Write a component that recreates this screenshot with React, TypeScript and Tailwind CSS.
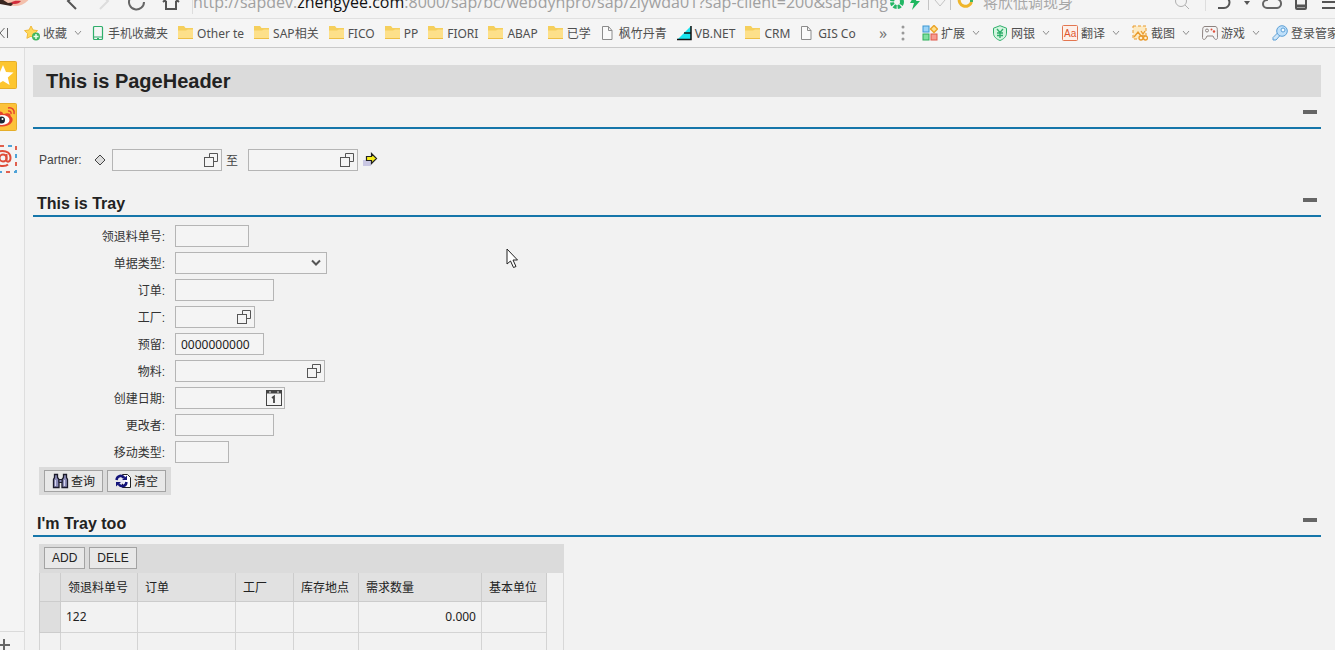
import type { ReactNode } from "react";

const FolderIcon = () => (
  <svg width="16" height="16" viewBox="0 0 16 16" className="shrink-0">
    <path d="M0 1h6l1.500 2H15v11H0z" fill="#f5cf5c" />
    <path d="M0 5.500h8l2-1h5V14H0z" fill="#fde08a" />
    <path d="M0 13.500h15" stroke="#eebf45" />
  </svg>
);

const PageIcon = () => (
  <svg width="15" height="16" viewBox="0 0 15 16" className="shrink-0" fill="#fafafa" stroke="#8c8c8c">
    <path d="M1.500 1.500h6l3.500 4v9H1.500z" />
    <path d="M7.500 1.500v4H11" fill="none" />
  </svg>
);

const StarAddIcon = () => (
  <svg width="16" height="16" viewBox="0 0 16 16" className="shrink-0">
    <path d="M7 1l2 4 4.500.6-3.200 3.100.8 4.600L7 11.200l-4.100 2.100.8-4.600L.5 5.600 5 5z" fill="#ffd95a" stroke="#f0b93a" />
    <circle cx="12" cy="11.500" r="4" fill="#3fb55f" />
    <path d="M12 9v5M9.500 11.500h5" stroke="#e9ffe9" strokeWidth="1.500" />
  </svg>
);

const PhoneIcon = () => (
  <svg width="13" height="16" viewBox="0 0 13 16" className="shrink-0" fill="none" stroke="#2fae6b">
    <rect x="1.500" y="1.500" width="9" height="13" rx="1" strokeWidth="1.200" />
    <path d="M2 12h8M5 13.500h2" />
  </svg>
);

const VbIcon = () => (
  <svg width="15" height="16" viewBox="0 0 15 16" className="shrink-0">
    <path d="M14 1v14H0z" fill="#19e3ee" />
    <path d="M14 1v13.500H0M7 8h7" stroke="#111" strokeWidth="1.500" fill="none" />
  </svg>
);

const Chevron = () => (
  <svg width="8" height="6" viewBox="0 0 8 6" className="shrink-0" fill="none" stroke="#8f8f8f">
    <path d="M1 1l3 3.500L7 1" />
  </svg>
);

const bookmarks: { label: string; icon: ReactNode; menu?: boolean }[] = [
  { label: "收藏", icon: <StarAddIcon />, menu: true },
  { label: "手机收藏夹", icon: <PhoneIcon /> },
  { label: "Other te", icon: <FolderIcon /> },
  { label: "SAP相关", icon: <FolderIcon /> },
  { label: "FICO", icon: <FolderIcon /> },
  { label: "PP", icon: <FolderIcon /> },
  { label: "FIORI", icon: <FolderIcon /> },
  { label: "ABAP", icon: <FolderIcon /> },
  { label: "已学", icon: <FolderIcon /> },
  { label: "枫竹丹青", icon: <PageIcon /> },
  { label: "VB.NET", icon: <VbIcon /> },
  { label: "CRM", icon: <FolderIcon /> },
  { label: "GIS Co", icon: <PageIcon /> },
];

const tools: { label: string; icon: ReactNode }[] = [
  {
    label: "扩展",
    icon: (
      <svg width="16" height="16" viewBox="0 0 16 16" className="shrink-0">
        <rect x="1" y="1" width="6" height="6" fill="#9bd3f7" stroke="#3b97d3" />
        <rect x="1" y="9" width="6" height="6" fill="#7fe0a0" stroke="#2fae5b" />
        <rect x="9" y="9" width="6" height="6" fill="#f79b8f" stroke="#e0584a" />
        <path d="M12 .5L15.500 4 12 7.500 8.500 4z" fill="#ffe08a" stroke="#eba52b" strokeWidth="1.500" />
      </svg>
    ),
  },
  {
    label: "网银",
    icon: (
      <svg width="16" height="16" viewBox="0 0 16 16" className="shrink-0" stroke="#2fae6b" fill="none">
        <path d="M8 .7l6.500 2.500v5c0 3.500-3 6-6.500 7.300-3.500-1.300-6.500-3.800-6.500-7.300v-5z" fill="#d3f5df" />
        <path d="M5 4l3 3.500L11 4M8 7.500V13M5 8h6M5 10.500h6" strokeWidth="1.300" />
      </svg>
    ),
  },
  {
    label: "翻译",
    icon: (
      <svg width="16" height="16" viewBox="0 0 16 16" className="shrink-0">
        <rect x=".5" y=".5" width="15" height="15" rx="1" fill="#fdf0ea" stroke="#e37650" />
        <text x="2" y="12" fontSize="10" fontFamily="Liberation Sans, sans-serif" fill="#e0562e">Aa</text>
      </svg>
    ),
  },
  {
    label: "截图",
    icon: (
      <svg width="16" height="16" viewBox="0 0 16 16" className="shrink-0" fill="none" stroke="#e99a2c">
        <rect x="1" y="1" width="13" height="13" fill="#fdeac2" strokeDasharray="3 2" />
        <path d="M2 12l4-5 3 4M9 6l4 6M13 6l-4 6" strokeWidth="1.300" />
        <circle cx="9" cy="13" r="2" fill="#fff0d0" strokeWidth="1.300" />
        <circle cx="13.500" cy="13" r="2" fill="#fff0d0" strokeWidth="1.300" />
      </svg>
    ),
  },
  {
    label: "游戏",
    icon: (
      <svg width="16" height="16" viewBox="0 0 16 16" className="shrink-0" fill="none" stroke="#8d8380">
        <path d="M3 1.500h10c1.500 0 2.300 1 2.300 3l.2 8c0 2.500-2.500 2.500-3.500.5L11 11H5l-1 2C3 15 .5 15 .5 12.500l.2-8c0-2 .8-3 2.300-3z" />
        <circle cx="5" cy="5.500" r="1.500" />
        <circle cx="9.500" cy="4.500" r="1" fill="#e0503c" stroke="none" />
        <circle cx="12" cy="6.500" r="1.200" fill="#e0503c" stroke="none" />
      </svg>
    ),
  },
  {
    label: "登录管家",
    icon: (
      <svg width="16" height="16" viewBox="0 0 16 16" className="shrink-0" stroke="#5c9fd6">
        <path d="M5.500 8L1 12.500V15h3l4-4.500" fill="#cfe6f8" />
        <circle cx="10" cy="6" r="5.300" fill="#bfe0fa" />
        <circle cx="11" cy="5" r="2" fill="#f4fbff" />
      </svg>
    ),
  },
];

function AddressBar() {
  return (
    <div className="flex h-[19px] shrink-0 items-end overflow-hidden border-b border-[#e0e0e0] bg-[#f4f4f4]">
      <div className="flex h-8 w-full shrink-0 items-center text-[#5a5a5a]">
        <svg width="34" height="32" viewBox="0 0 34 32" className="shrink-0">
          <circle cx="15" cy="2" r="18" fill="#f3c0ac" />
          <path d="M0 12l8 5 7-1-4 4-11-2z" fill="#3a2620" />
          <path d="M11 17c3 2 8 1 10-2-3 0-7-1-10 2z" fill="#d22c3c" />
        </svg>
        <div className="flex w-[158px] shrink-0 items-center gap-4 pl-8">
          <svg width="12" height="18" viewBox="0 0 12 18" className="shrink-0" fill="none" stroke="#555" strokeWidth="2"><path d="M10 1L2 8l8 8" /></svg>
          <svg width="18" height="18" viewBox="0 0 18 18" className="shrink-0" fill="none" stroke="#ddd" strokeWidth="2"><path d="M6 1l8 7-8 8" /></svg>
          <svg width="18" height="18" viewBox="0 0 18 18" className="shrink-0" fill="none" stroke="#666" strokeWidth="2"><path d="M16 9a7.500 7.500 0 1 1-3-6" /></svg>
          <svg width="18" height="18" viewBox="0 0 18 18" className="shrink-0" fill="none" stroke="#555" strokeWidth="2"><path d="M1 9l8-7 8 7M4 8v8h10V8" /></svg>
        </div>
        <div className="w-[697px] shrink-0 border-l border-[#dddddd] font-['Open_Sans','Noto_Sans_CJK_SC',sans-serif] text-base whitespace-nowrap text-[#a0a0a0]">
          http://sapdev.<span className="text-[#111111]">zhengyee.com</span>:8000/sap/bc/webdynpro/sap/zlywda01?sap-client=200&amp;sap-lang
        </div>
        <div className="flex shrink-0 items-center gap-1">
          <svg width="16" height="16" viewBox="0 0 16 16"><circle cx="8" cy="8" r="5" fill="none" stroke="#22b765" strokeWidth="4" strokeDasharray="3 1" /></svg>
          <svg width="12" height="16" viewBox="0 0 12 16"><path d="M6 0L1 9h4l-2 7 8-9H7l3-7z" fill="#1fb860" /></svg>
          <svg width="28" height="16" viewBox="0 0 28 16" fill="none" stroke="#c4c4c4"><path d="M3.500 0v16M10 6l5 6 5-6M25.500 0v16" /></svg>
          <svg width="18" height="18" viewBox="0 0 18 18" fill="none" strokeWidth="3"><path d="M2.500 5a6 6 0 0 0 12 4" stroke="#efb52b" /><path d="M14.500 9V3" stroke="#3fb560" /></svg>
        </div>
        <span className="shrink-0 pl-2 text-[15px] whitespace-nowrap text-[#a8a8a8]">蒋欣低调现身</span>
        <div className="ml-auto flex shrink-0 items-center gap-3">
          <svg width="17" height="18" viewBox="0 0 17 18" fill="none" stroke="#b0b0b0"><circle cx="8" cy="8" r="5.500" /><path d="M12 12l4 4" /></svg>
          <svg width="30" height="18" viewBox="0 0 30 18" fill="none" stroke="#555" strokeWidth="2"><path d="M3.500 0v18" stroke="#ddd" strokeWidth="1" /><path d="M20 4h2a5 5 0 0 1 0 11h-6" /></svg>
          <svg width="6" height="18" viewBox="0 0 6 18"><path d="M0 8h6l-3 4z" fill="#555" /></svg>
          <svg width="20" height="18" viewBox="0 0 20 18" fill="none" stroke="#666" strokeWidth="2"><path d="M5 15a4 4 0 0 1 0-8 5 5 0 0 1 9-1 4.500 4.500 0 0 1 1 9z" /></svg>
          <svg width="16" height="18" viewBox="0 0 16 18" fill="none" stroke="#555" strokeWidth="2"><rect x="2" y="1" width="10" height="15" rx="1" /><path d="M2 13h10" strokeWidth="3" /></svg>
          <svg width="13" height="18" viewBox="0 0 13 18" stroke="#555" strokeWidth="2"><path d="M0 3h14M0 9h14M0 15h14" /></svg>
        </div>
      </div>
    </div>
  );
}

function BookmarksBar() {
  return (
    <nav className="flex h-[29px] shrink-0 items-center overflow-hidden border-b border-[#c9c9c9] bg-[#f5f5f5] text-xs whitespace-nowrap text-[#505050]">
      <svg width="24" height="12" viewBox="0 0 24 12" className="shrink-0" fill="none" stroke="#666">
        <path d="M4.500 1L0 6l4.500 5M7.500 1v10" />
      </svg>
      <div className="flex w-[855px] shrink-0 items-center gap-[10px] overflow-hidden">
        {bookmarks.map((b) => (
          <a key={b.label} href="#" className="flex shrink-0 items-center gap-[3px]">
            {b.icon}
            <span className="pt-[2px]">{b.label}</span>
            {b.menu && <span className="pl-1"><Chevron /></span>}
          </a>
        ))}
      </div>
      <button type="button" className="w-5 shrink-0 text-left text-base leading-4 text-[#777777]">»</button>
      <svg width="23" height="16" viewBox="0 0 23 16" className="shrink-0" fill="#999">
        <circle cx="4" cy="2" r="1.500" />
        <circle cx="4" cy="8" r="1.500" />
        <circle cx="4" cy="14" r="1.500" />
      </svg>
      {tools.map((t) => (
        <a key={t.label} href="#" className="flex w-[70px] shrink-0 items-center gap-[3px]">
          {t.icon}
          <span className="pt-[2px]">{t.label}</span>
          <span className="pl-1"><Chevron /></span>
        </a>
      ))}
    </nav>
  );
}

function SideBar() {
  return (
    <aside className="flex w-[25px] shrink-0 flex-col items-end overflow-hidden border-r border-[#dedede] bg-[#f4f4f4] pt-[13px]">
      <div className="flex flex-col gap-[14px] pr-[7px]">
        <svg width="28" height="28" viewBox="0 0 28 28">
          <rect x=".5" y=".5" width="27" height="27" rx="1" fill="#fdc62f" stroke="#e5ae2a" />
          <path d="M14 4l3 7 7.500.5-5.700 5 1.800 7.500-6.600-4-6.600 4 1.800-7.500-5.700-5L11 11z" fill="#fff" />
        </svg>
        <svg width="28" height="28" viewBox="0 0 28 28">
          <rect x=".5" y=".5" width="27" height="27" rx="1" fill="#fcc23a" stroke="#e5ae2a" />
          <path d="M3 17c0-6 7-10 10-8 1.500 1 .5 2 2 2s4-1.500 6 0c1 1 0 2 1.500 3 3 3 0 9-9 9.500C8 24 3 21 3 17z" fill="#e6432d" />
          <ellipse cx="13" cy="17" rx="7.500" ry="5" fill="#fff" />
          <circle cx="12.500" cy="17" r="3.500" fill="#1b2633" />
          <circle cx="13.500" cy="16" r="1" fill="#fff" />
          <path d="M19 5c4-1 7 2 6 6M19 8c2-.5 3.500 1 3 3" fill="none" stroke="#e6432d" strokeWidth="1.500" />
        </svg>
        <svg width="28" height="28" viewBox="0 0 28 28" fill="none" strokeWidth="2">
          <rect x="1" y="1" width="26" height="26" stroke="#4fa3d8" strokeDasharray="4 12" strokeDashoffset="-2" />
          <rect x="1" y="1" width="26" height="26" stroke="#e0604e" strokeDasharray="4 12" strokeDashoffset="6" />
          <circle cx="14" cy="13" r="3.500" stroke="#df4c38" />
          <path d="M17.500 9v6c0 3 4 2 4-2 0-5-4-7-8-7-4.500 0-8 3-8 7.500S9 21 14 21c2 0 4-.5 5-1.500" stroke="#df4c38" />
        </svg>
      </div>
      <div className="mt-auto h-[19px] w-full border-t border-[#dadada] pt-[7px]">
        <svg width="12" height="12" viewBox="0 0 12 12" stroke="#666" strokeWidth="2">
          <path d="M4 0v12M0 6h10" />
        </svg>
      </div>
    </aside>
  );
}

const SearchHelpIcon = () => (
  <svg width="16" height="16" viewBox="0 0 16 16" fill="none" stroke="#555">
    <rect x="1.500" y="5.500" width="9" height="9" />
    <path d="M6.500 5V1.500h8v8H11" />
  </svg>
);

const CalendarIcon = () => (
  <svg width="16" height="16" viewBox="0 0 16 16" fill="none" stroke="#444">
    <rect x=".5" y=".5" width="15" height="15" />
    <path d="M0 2h16" strokeWidth="3" />
    <path d="M3 2h2M11 2h2" stroke="#eee" />
    <path d="M6 8l2-1.500V13" strokeWidth="1.800" />
  </svg>
);

const DownIcon = () => (
  <svg width="10" height="8" viewBox="0 0 10 8" fill="none" stroke="#555" strokeWidth="2">
    <path d="M1 1.500l4 4 4-4" />
  </svg>
);

type FieldProps = { id: string; width: string; value?: string; icon?: ReactNode };

function Field({ id, width, value = "", icon }: FieldProps) {
  return (
    <div className={`flex h-[22px] items-center border border-[#b5b5b5] bg-[#f4f4f4] ${width}`}>
      <input id={id} defaultValue={value} className="h-full w-full min-w-0 flex-1 bg-transparent px-[5px] font-['Noto_Sans',sans-serif] text-xs text-[#222222] outline-none" />
      {icon && <button type="button" aria-label="Value help" className="mr-[2px] shrink-0">{icon}</button>}
    </div>
  );
}

const fields: (FieldProps & { label: string; select?: boolean })[] = [
  { id: "docNo", label: "领退料单号:", width: "w-[74px]" },
  { id: "docType", label: "单据类型:", width: "w-[152px]", select: true },
  { id: "order", label: "订单:", width: "w-[99px]" },
  { id: "plant", label: "工厂:", width: "w-[80px]", icon: <SearchHelpIcon /> },
  { id: "reservation", label: "预留:", width: "w-[89px]", value: "0000000000" },
  { id: "material", label: "物料:", width: "w-[150px]", icon: <SearchHelpIcon /> },
  { id: "created", label: "创建日期:", width: "w-[110px]", icon: <CalendarIcon /> },
  { id: "changedBy", label: "更改者:", width: "w-[99px]" },
  { id: "moveType", label: "移动类型:", width: "w-[54px]" },
];

function TrayHeader({ title }: { title?: string }) {
  return (
    <div className="flex h-8 items-center justify-between border-b-2 border-[#1676aa] pr-1 pl-1">
      <h2 className="pt-2 text-base leading-5 font-bold text-[#222222]">{title}</h2>
      <button type="button" aria-label="Collapse" className="h-1 w-[14px] bg-[#666666]" />
    </div>
  );
}

function ToolButton({ children }: { children: ReactNode }) {
  return (
    <button type="button" className="flex h-[22px] items-center gap-[2px] border border-[#a3a3a3] bg-[#e8e8e8] px-[7px] text-xs text-[#222222]">
      {children}
    </button>
  );
}

const columns = [
  { label: "领退料单号", width: "w-[77px]" },
  { label: "订单", width: "w-[98px]" },
  { label: "工厂", width: "w-[58px]" },
  { label: "库存地点", width: "w-[65px]" },
  { label: "需求数量", width: "w-[123px]" },
  { label: "基本单位", width: "w-[65px]" },
];

const rows = [
  ["122", "", "", "", "0.000", ""],
  ["", "", "", "", "", ""],
];

function ResultTable() {
  return (
    <div className="ml-[6px] w-[525px] border-r border-[#d8d8d8]">
      <div className="-mr-px flex h-[29px] items-start gap-1 bg-[#dbdbdb] pt-[3px] pl-[5px]">
        <ToolButton>ADD</ToolButton>
        <ToolButton>DELE</ToolButton>
      </div>
      <table className="w-[507px] table-fixed border-collapse text-xs text-[#222222]">
        <thead>
          <tr className="h-7 bg-[#e1e1e1]">
            <th className="w-[21px] border border-t-0 border-[#cccccc]" />
            {columns.map((c) => (
              <th key={c.label} className={`border border-t-0 border-[#cccccc] pt-[2px] pl-[7px] text-left font-normal whitespace-nowrap ${c.width}`}>
                {c.label}
              </th>
            ))}
          </tr>
        </thead>
        <tbody>
          {rows.map((row, r) => (
            <tr key={r} className="h-[31px] font-['Noto_Sans',sans-serif]">
              <td className={r === 0 ? "border border-[#cccccc] bg-[#dedede]" : "border border-[#d4d4d4]"} />
              {row.map((cell, i) => (
                <td key={i} className={`border border-[#d4d4d4] px-[5px] ${i === 4 ? "text-right" : "text-left"}`}>
                  {cell}
                </td>
              ))}
            </tr>
          ))}
        </tbody>
      </table>
    </div>
  );
}

export default function App() {
  return (
    <div className="flex h-screen flex-col overflow-hidden bg-[#f2f2f2] font-['Noto_Sans','Noto_Sans_CJK_SC',sans-serif]">
      <AddressBar />
      <BookmarksBar />
      <div className="flex min-h-0 flex-1">
        <SideBar />
        <main className="relative min-w-0 flex-1 overflow-hidden pt-[17px] pr-[14px] pl-2 font-['Liberation_Sans','Noto_Sans_CJK_SC',sans-serif]">
          <h1 className="flex h-8 items-center bg-[#dbdbdb] pl-[13px] text-xl font-bold text-[#222222]">This is PageHeader</h1>

          <TrayHeader />
          <div className="flex h-14 items-center pt-[6px] pl-[6px] text-xs text-[#444444]">
            <label htmlFor="partnerLow" className="w-[54px]">Partner:</label>
            <svg width="14" height="14" viewBox="0 0 14 14" className="mr-[5px]">
              <path d="M7 2l5 5-5 5-5-5z" fill="#dcdcdc" stroke="#444" />
            </svg>
            <Field id="partnerLow" width="w-[110px]" icon={<SearchHelpIcon />} />
            <label htmlFor="partnerHigh" className="w-[26px] pt-[2px] pl-1">至</label>
            <Field id="partnerHigh" width="w-[110px]" icon={<SearchHelpIcon />} />
            <button type="button" aria-label="Multiple selection" className="ml-[5px]">
              <svg width="16" height="16" viewBox="0 0 16 16">
                <path d="M0 8h8v6H0z" fill="#c9c7e3" />
                <path d="M3.500 4.500h5v-3l5 5-5 5v-3h-5z" fill="#f7ee1c" stroke="#222" strokeWidth="1.200" />
              </svg>
            </button>
          </div>

          <TrayHeader title="This is Tray" />
          <form className="flex flex-col gap-[5px] pt-2 text-xs text-[#333333]">
            {fields.map((f) => (
              <div key={f.id} className="flex items-center gap-[10px]">
                <label htmlFor={f.id} className="w-[132px] pt-[2px] text-right">{f.label}</label>
                {f.select ? (
                  <div className="grid items-center">
                    <select id={f.id} className={`col-start-1 row-start-1 h-[22px] appearance-none border border-[#b5b5b5] bg-[#f4f4f4] ${f.width}`}>
                      <option></option>
                    </select>
                    <span className="pointer-events-none col-start-1 row-start-1 mr-[6px] justify-self-end"><DownIcon /></span>
                  </div>
                ) : (
                  <Field id={f.id} width={f.width} value={f.value} icon={f.icon} />
                )}
              </div>
            ))}
          </form>
          <div className="mt-1 ml-[6px] flex h-7 w-[132px] items-center gap-1 bg-[#dbdbdb] pl-[5px]">
            <ToolButton>
              <svg width="17" height="16" viewBox="0 0 17 16" stroke="#1b1b2b" fill="#8c8cb8">
                <path d="M2.500 1.500h3v3l1.500 2v8H1.500v-8l1-2zM11.500 1.500h3v3l1 2v8H10v-8l1.500-2z" strokeWidth="1.300" />
                <path d="M7 6.500h3v3H7z" />
                <path d="M3.500 7v6M12.500 7v6" stroke="#d6d6ee" />
              </svg>
              <span className="pt-[2px]">查询</span>
            </ToolButton>
            <ToolButton>
              <svg width="17" height="16" viewBox="0 0 17 16" fill="none">
                <path d="M7.500 1.500h5l3 3v10h-8z" fill="#fff" stroke="#222" />
                <circle cx="6.500" cy="8" r="3" fill="#e8e8f4" />
                <path d="M1.500 7C2 2.500 7 1.500 9.500 5M11.500 9c-.5 4.500-5.500 5.500-8 2" stroke="#14147a" strokeWidth="2.500" />
                <path d="M12 2.500V7H7zM1 13.500V9h5z" fill="#14147a" />
              </svg>
              <span className="pt-[2px]">清空</span>
            </ToolButton>
          </div>

          <div className="pt-[10px]">
            <TrayHeader title="I'm Tray too" />
          </div>
          <div className="pt-[7px]">
            <ResultTable />
          </div>

          <svg width="14" height="21" viewBox="0 0 14 21" className="pointer-events-none absolute top-[200px] left-[481px]">
            <path d="M1 1v15l3.500-3 3 6.500 2.500-1-3-6.500h4.500z" fill="#fff" stroke="#222" />
          </svg>
        </main>
      </div>
    </div>
  );
}
